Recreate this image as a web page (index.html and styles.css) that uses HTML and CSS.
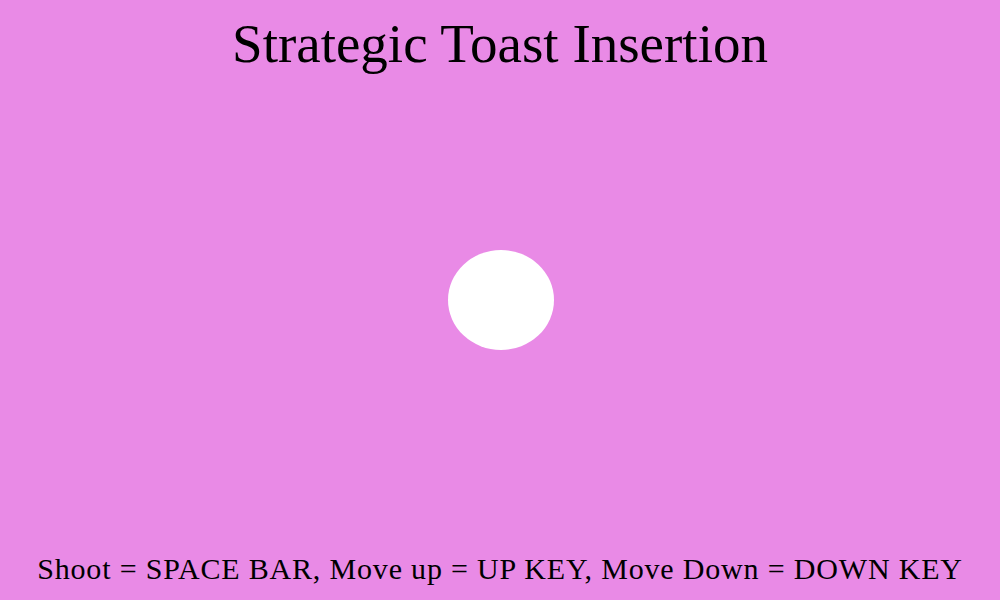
FILE: index.html
```html
<!DOCTYPE html>
<html>
<head>
<meta charset="utf-8">
<link rel="stylesheet" href="styles.css">
</head>
<body>
<main class="stage">
  <h1 class="title">Strategic Toast Insertion</h1>
  <div class="field">
    <div class="ball"></div>
  </div>
  <p class="help">Shoot = SPACE BAR, Move up = UP KEY, Move Down = DOWN KEY</p>
</main>
</body>
</html>
```
FILE: styles.css
```css
html, body {
  margin: 0;
  padding: 0;
  background: #e98ae6;
}
.stage {
  width: 1000px;
  height: 600px;
  display: flex;
  flex-direction: column;
  align-items: center;
  font-family: "Liberation Serif", "Times New Roman", serif;
  color: #000;
}
.title {
  margin: 14px 0 0 0;
  font-size: 55px;
  font-weight: normal;
  line-height: 60px;
  height: 60px;
}
.field {
  flex: 1;
  display: flex;
  align-items: center;
  justify-content: center;
  width: 100%;
}
.ball {
  width: 106px;
  height: 100px;
  border-radius: 50%;
  background: #fff;
  margin-left: 2px;
  margin-bottom: 27px;
}
.help {
  margin: 0 0 14px 0;
  font-size: 30px;
  line-height: 34px;
  letter-spacing: 0.82px;
}
```
